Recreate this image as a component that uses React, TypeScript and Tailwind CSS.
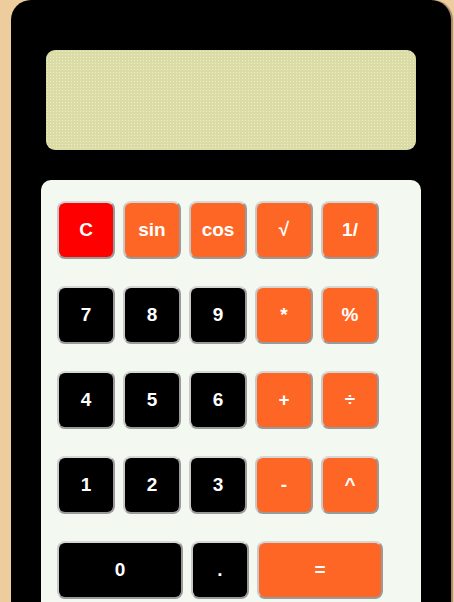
import React from 'react';

type Key = { label: string; kind: 'clear' | 'op' | 'num'; wide?: boolean };

const rows: Key[][] = [
    [
        { label: 'C', kind: 'clear' },
        { label: 'sin', kind: 'op' },
        { label: 'cos', kind: 'op' },
        { label: '√', kind: 'op' },
        { label: '1/', kind: 'op' },
    ],
    [
        { label: '7', kind: 'num' },
        { label: '8', kind: 'num' },
        { label: '9', kind: 'num' },
        { label: '*', kind: 'op' },
        { label: '%', kind: 'op' },
    ],
    [
        { label: '4', kind: 'num' },
        { label: '5', kind: 'num' },
        { label: '6', kind: 'num' },
        { label: '+', kind: 'op' },
        { label: '÷', kind: 'op' },
    ],
    [
        { label: '1', kind: 'num' },
        { label: '2', kind: 'num' },
        { label: '3', kind: 'num' },
        { label: '-', kind: 'op' },
        { label: '^', kind: 'op' },
    ],
    [
        { label: '0', kind: 'num', wide: true },
        { label: '.', kind: 'num' },
        { label: '=', kind: 'op', wide: true },
    ],
];

function CalcKey({ k }: { k: Key }) {
    const colour =
        k.kind === 'clear' ? 'bg-[#ff0000]' : k.kind === 'op' ? 'bg-[#fe6625]' : 'bg-black';
    return (
        <button
            className={`${colour} ${k.wide ? 'w-[126px]' : 'w-[58px]'} h-[58px] shrink-0 rounded-[8px] border-2 border-[#9a9a9a] border-t-[#d6d6d6] border-l-[#c8c8c8] text-white text-[19px] font-bold flex items-center justify-center`}
        >
            {k.label}
        </button>
    );
}

export default function App() {
    return (
        <div className="min-h-[602px] bg-[#edcd9d] overflow-hidden font-['Liberation_Sans',Arial,sans-serif]">
            <div className="ml-[11px] w-[440px] h-[640px] bg-black rounded-t-[20px] shadow-[2px_0_1px_#a8896a] pt-[50px]">
                {/* Display */}
                <div className="mx-[35px] h-[100px] rounded-[9px] bg-[#dadca5] bg-[radial-gradient(#f4ecc8_0.8px,transparent_1px)] bg-[length:3px_3px]"></div>

                {/* Keypad */}
                <div className="mt-[30px] mx-[30px] h-[480px] bg-[#f3f8f1] rounded-[10px] pt-[21px] pl-[16px] flex flex-col gap-[27px]">
                    {rows.map((row, i) => (
                        <div key={i} className="flex gap-[8px]">
                            {row.map((k) => (
                                <CalcKey key={k.label} k={k} />
                            ))}
                        </div>
                    ))}
                </div>
            </div>
        </div>
    );
}
